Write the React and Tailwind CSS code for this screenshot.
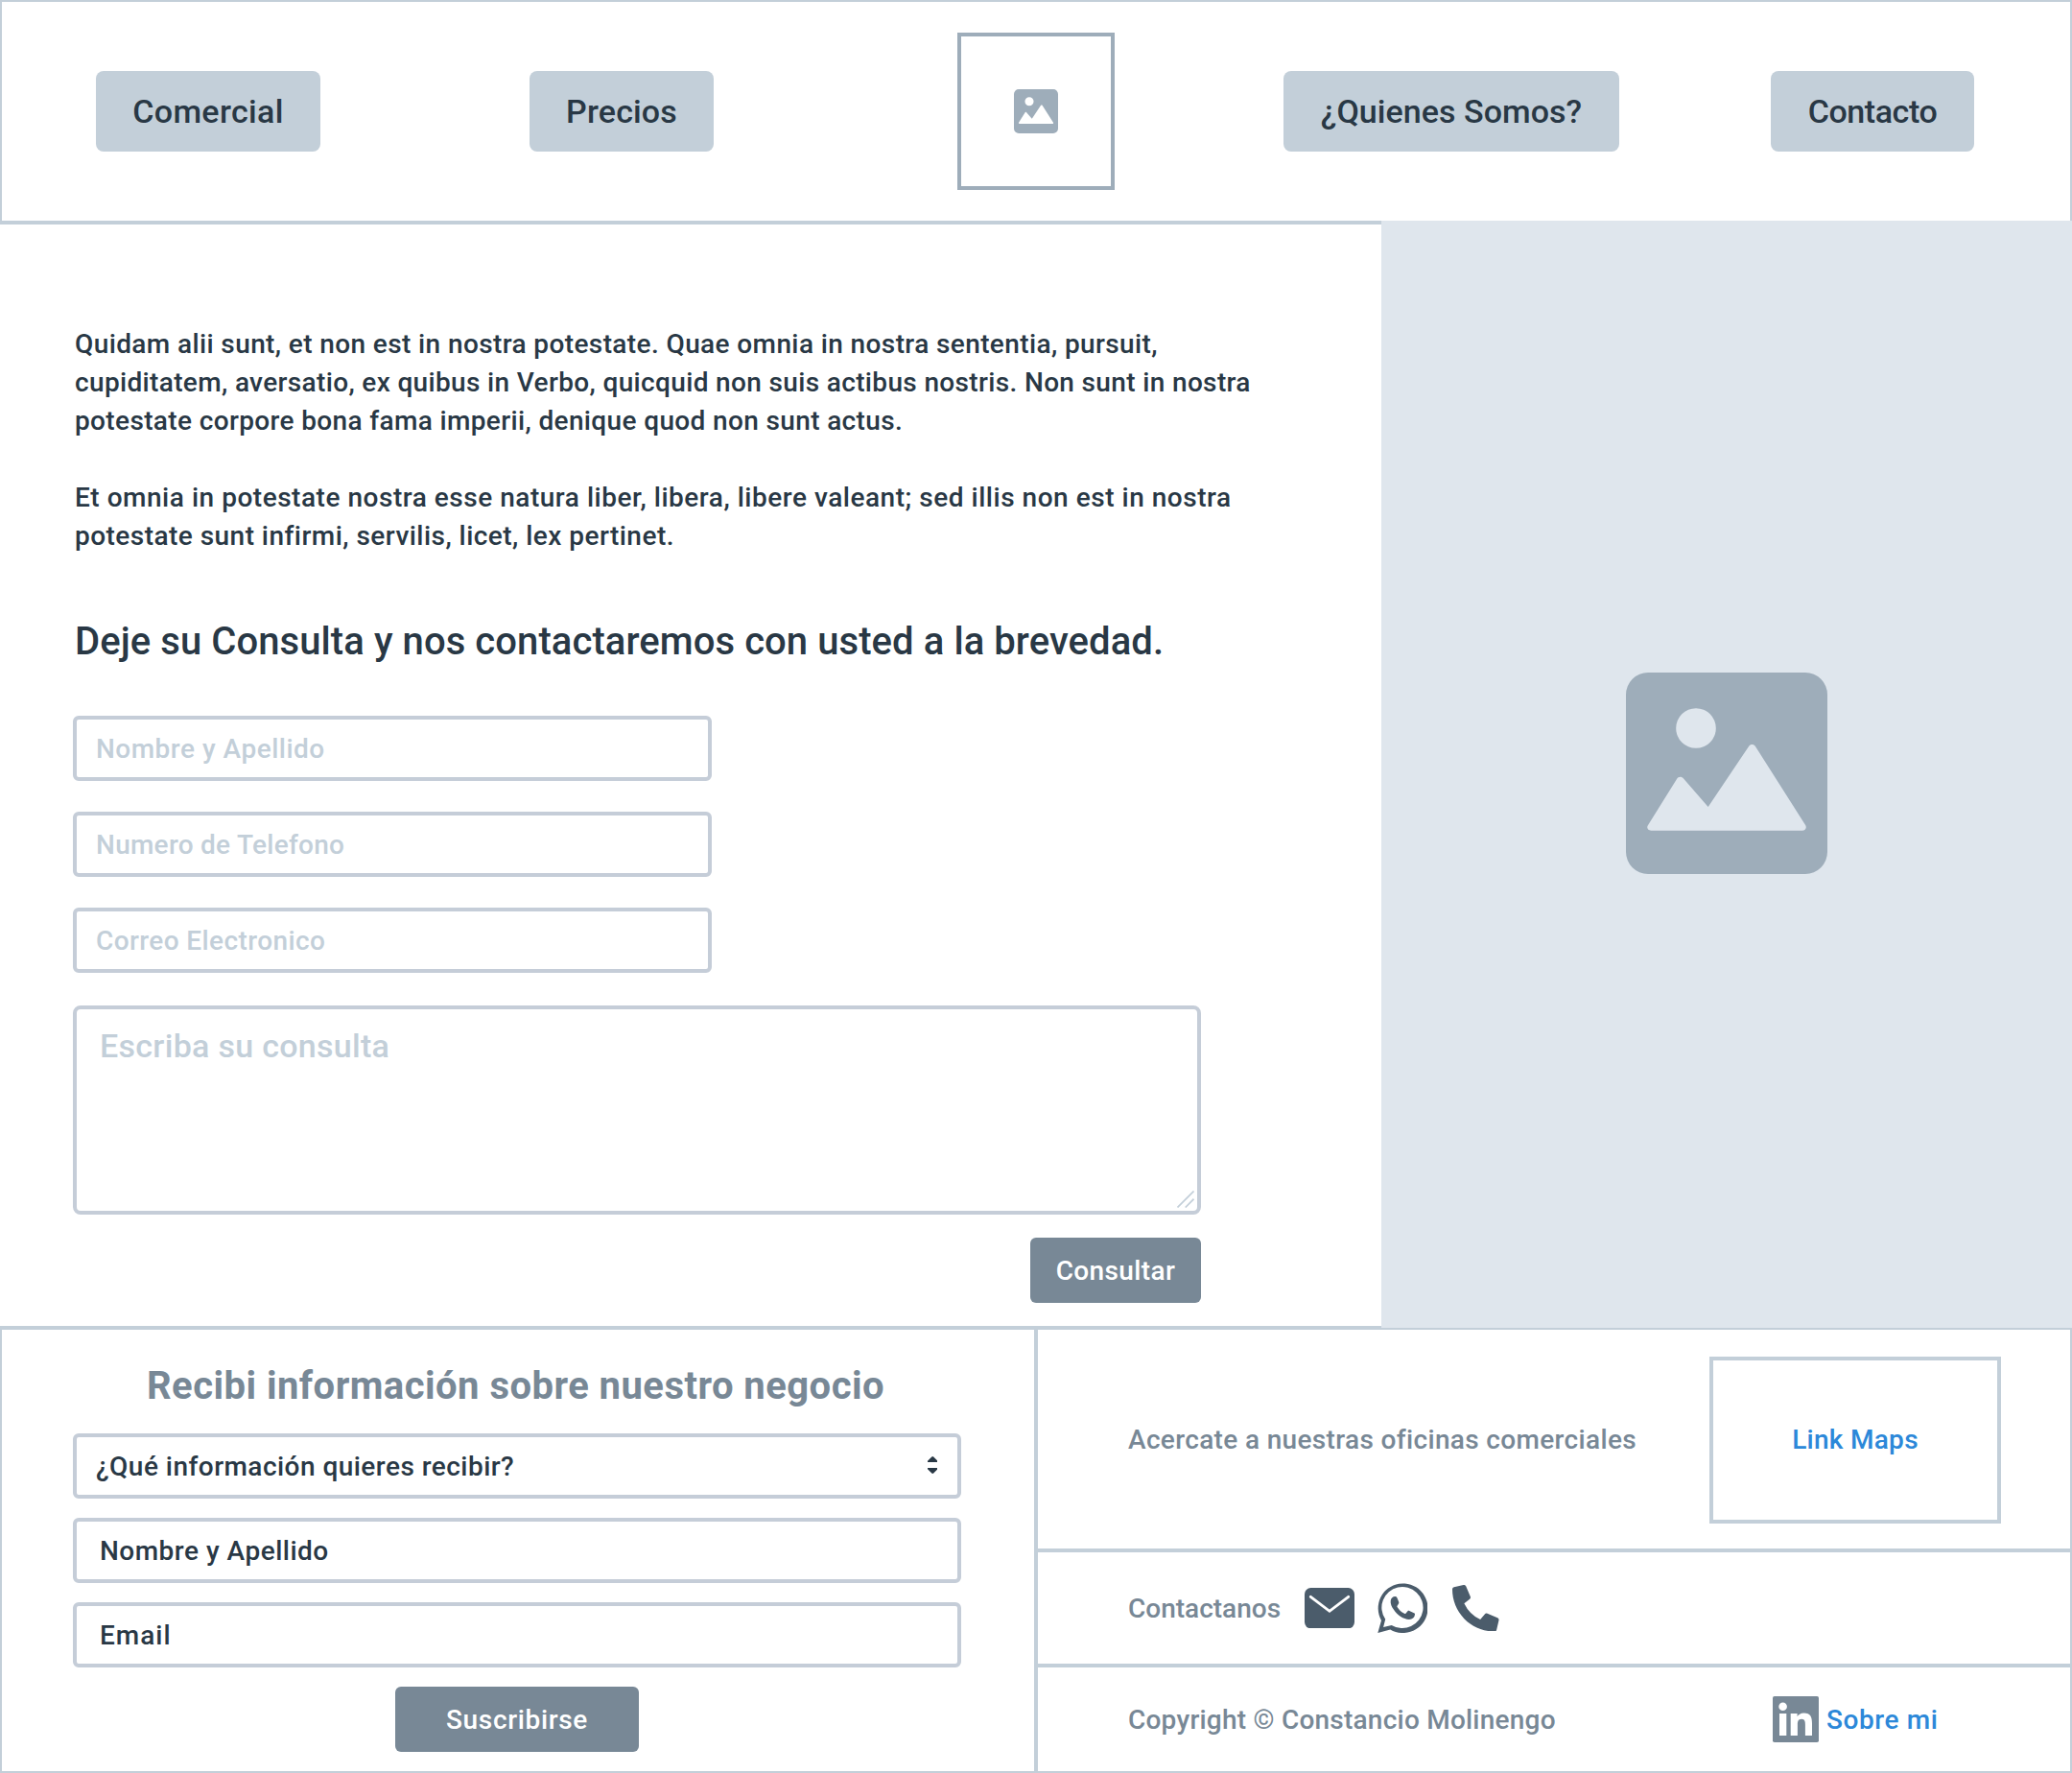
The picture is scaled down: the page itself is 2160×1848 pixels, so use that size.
import React from "react";

function NavButton({ className, children }) {
  return (
    <button
      className={`flex h-[84px] shrink-0 items-center justify-center whitespace-nowrap rounded-[8px] bg-[#c3cfd9] text-[34px] leading-[40px] ${className}`}
    >
      {children}
    </button>
  );
}

function Field({ className = "", children }) {
  return (
    <div
      className={`flex h-[68px] shrink-0 items-center whitespace-nowrap rounded-[6px] border-4 border-[#c5cdd8] pt-[2px] ${className}`}
    >
      {children}
    </div>
  );
}

function ImageIcon({ className }) {
  return (
    <svg viewBox="0 0 210 210" className={className}>
      <path
        fillRule="evenodd"
        fill="#9eadba"
        d="M23 0H187A23 23 0 0 1 210 23V187A23 23 0 0 1 187 210H23A23 23 0 0 1 0 187V23A23 23 0 0 1 23 0ZM73 37.2A20.8 20.8 0 1 0 73 78.8A20.8 20.8 0 1 0 73 37.2ZM22.9 159.2L53 111C54.5 108.2 57.8 108 59.8 110.2L85.7 140L128.2 76.8C129.6 74.3 133.2 74.3 134.8 76.8L187.1 159C188.8 161.8 187 164.7 183.8 164.7H26.2C23 164.7 21.2 162 22.9 159.2Z"
      />
    </svg>
  );
}

function MailIcon() {
  return (
    <svg viewBox="0 0 52 42.3" className="h-[42.3px] w-[52px] shrink-0">
      <rect width="52" height="42.3" rx="6.5" fill="#4b5c6b" />
      <path
        d="M6.3 9.3L26 24.3L45.7 9.3"
        fill="none"
        stroke="#fff"
        strokeWidth="2.9"
        strokeLinecap="round"
      />
    </svg>
  );
}

function WhatsappIcon() {
  return (
    <svg viewBox="0 0 52 52" className="size-[52px] shrink-0" fill="#4b5c6b">
      <path
        fillRule="evenodd"
        d="M0.3 51.9L4 38.9A25.9 25.8 0 1 1 13.3 48.4ZM6.1 46.1L14.7 43.9A21.6 21.5 0 1 0 8.2 37.8Z"
      />
      <path d="M13.7 18.4C14.1 15.8 16.3 13.9 18.6 14.1C19.8 14.2 20.2 14.9 20.7 16.1L22.2 19.8C22.6 20.9 22.2 21.7 20.6 23.7C20.3 24.2 20.3 24.5 20.6 25C22.5 28 24.7 30.1 28 31.8C28.7 32.2 29.1 32.1 29.6 31.5L31.5 29.2C32 28.6 32.5 28.6 33.2 28.9L38 31.2C38.8 31.6 39.1 31.9 39 32.7C38.7 35.9 36.3 37.7 33 37.9C27.5 38 20.7 33.6 16.8 27.5C14.8 24.6 13.3 21.5 13.7 18.4Z" />
    </svg>
  );
}

function PhoneIcon() {
  return (
    <svg viewBox="0 0 512 512" className="size-[48.5px] shrink-0" fill="#4b5c6b">
      <path d="M497.39 361.8l-112-48a24 24 0 0 0-28 6.9l-49.6 60.6A370.66 370.66 0 0 1 130.6 204.11l60.6-49.6a23.94 23.94 0 0 0 6.9-28l-48-112A24.16 24.16 0 0 0 122.6.61l-104 24A24 24 0 0 0 0 48c0 256.5 207.9 464 464 464a24 24 0 0 0 23.4-18.6l24-104a24.29 24.29 0 0 0-14.01-27.6z" />
    </svg>
  );
}

function LinkedinIcon() {
  return (
    <svg viewBox="0 0 48 48" className="size-[48px] shrink-0">
      <rect width="48" height="48" rx="1.8" fill="#788896" />
      <g fill="#fff">
        <circle cx="10.6" cy="10.7" r="4.3" />
        <rect x="7" y="18" width="7.3" height="23" />
        <path d="M18.7 18H25.6V21.1H25.7C26.7 19.3 29 17.4 32.5 17.4C39.7 17.4 41 22.1 41 28.3V41H33.9V29.8C33.9 27.1 33.8 23.7 30.1 23.7C26.4 23.7 25.9 26.6 25.9 29.6V41H18.7Z" />
      </g>
    </svg>
  );
}

function Header() {
  return (
    <header className="flex h-[230px] items-center border-x-2 border-t-2 border-[#c3cfd9] pl-[98px]">
      <NavButton className="w-[234px] tracking-[0.35px]">Comercial</NavButton>
      <NavButton className="ml-[218px] w-[192px] tracking-[0.16px]">Precios</NavButton>
      <div className="ml-[254px] flex size-[164px] shrink-0 items-center justify-center border-4 border-[#9eadba]">
        <ImageIcon className="size-[46px]" />
      </div>
      <NavButton className="ml-[176px] w-[350px] tracking-[0.05px]">¿Quienes Somos?</NavButton>
      <NavButton className="ml-[158px] w-[212px] tracking-[-0.43px]">Contacto</NavButton>
    </header>
  );
}

function Main() {
  return (
    <main className="flex h-[1156px]">
      <section className="w-[1440px] shrink-0 border-y-4 border-[#c3cfd9] pl-[76px] pt-[105px]">
        <div className="flex flex-col gap-[40px] whitespace-nowrap pl-[2px] text-[28px] leading-[40px]">
          <p>
            <span className="block tracking-[0.39px]">
              Quidam alii sunt, et non est in nostra potestate. Quae omnia in nostra sententia, pursuit,
            </span>
            <span className="block tracking-[0.35px]">
              cupiditatem, aversatio, ex quibus in Verbo, quicquid non suis actibus nostris. Non sunt in nostra
            </span>
            <span className="block tracking-[0.362px]">
              potestate corpore bona fama imperii, denique quod non sunt actus.
            </span>
          </p>
          <p>
            <span className="block tracking-[0.525px]">
              Et omnia in potestate nostra esse natura liber, libera, libere valeant; sed illis non est in nostra
            </span>
            <span className="block tracking-[0.464px]">
              potestate sunt infirmi, servilis, licet, lex pertinet.
            </span>
          </p>
        </div>
        <h1 className="mt-[66px] whitespace-nowrap pl-[2px] text-[40px] leading-[48px] tracking-[0.074px]">
          Deje su Consulta y nos contactaremos con usted a la brevedad.
        </h1>
        <div className="mt-[53px] flex w-[666px] flex-col gap-[32px] text-[28px] text-[#c3cfd9]">
          <Field className="pl-[20px] tracking-[0.494px]">Nombre y Apellido</Field>
          <Field className="pl-[20px] tracking-[0.265px]">Numero de Telefono</Field>
          <Field className="pl-[20px] tracking-[0.4px]">Correo Electronico</Field>
        </div>
        <div className="mt-[34px] flex h-[218px] w-[1176px] items-start justify-between rounded-[8px] border-4 border-[#c5cdd8] pl-[24px] pt-[18px] text-[34px] leading-[40px] tracking-[0.298px] text-[#c3cfd9]">
          <span>Escriba su consulta</span>
          <svg viewBox="0 0 18 18" className="mb-[3px] mr-[3px] size-[18px] self-end" fill="none" stroke="#c3cfd9" strokeWidth="1.7">
            <path d="M0.5 17.5L17.5 0.5M8.7 17.5L17.5 8.7" />
          </svg>
        </div>
        <div className="mt-[24px] flex w-[1176px] justify-end">
          <button className="h-[68px] w-[178px] rounded-[6px] bg-[#788896] pt-[2px] text-[28px] tracking-[0.376px] text-white">
            Consultar
          </button>
        </div>
      </section>
      <aside className="flex grow items-center justify-center border-b-2 border-[#c3cfd9] bg-[#dfe6ed] pb-[2px]">
        <ImageIcon className="size-[210px]" />
      </aside>
    </main>
  );
}

function Subscribe() {
  return (
    <section className="flex w-[1080px] shrink-0 flex-col border-r-4 border-[#c3cfd9] pl-[74px] pt-[35px] text-[28px]">
      <h2 className="whitespace-nowrap pl-[77px] text-[40px] font-bold leading-[48px] tracking-[0.46px] text-[#788896]">
        Recibi información sobre nuestro negocio
      </h2>
      <div className="mt-[25px] flex w-[926px] flex-col gap-[20px]">
        <Field className="justify-between pl-[20px] pr-[21px] tracking-[0.465px]">
          <span>¿Qué información quieres recibir?</span>
          <svg viewBox="0 0 10.5 18" className="mb-[4px] h-[18px] w-[10.5px]" fill="#293845">
            <path d="M0 6V4.8L4.3 0.4Q5.25 -0.4 6.2 0.4L10.5 4.8V6ZM0 12V13.2L4.3 17.6Q5.25 18.4 6.2 17.6L10.5 13.2V12Z" />
          </svg>
        </Field>
        <Field className="pl-[24px] tracking-[0.494px]">Nombre y Apellido</Field>
        <Field className="pl-[24px] tracking-[1px]">Email</Field>
        <button className="ml-[336px] h-[68px] w-[254px] rounded-[6px] bg-[#788896] pt-[2px] tracking-[0.653px] text-white">
          Suscribirse
        </button>
      </div>
    </section>
  );
}

function Contact() {
  return (
    <section className="flex grow flex-col whitespace-nowrap text-[28px] text-[#788896]">
      <div className="flex h-[232px] items-center border-b-4 border-[#c3cfd9] pl-[94px]">
        <span className="w-[606px] pt-[2px] tracking-[0.344px]">Acercate a nuestras oficinas comerciales</span>
        <a className="mt-[2px] flex h-[174px] w-[304px] items-center justify-center border-4 border-[#c3cfd9] tracking-[0.285px] text-[#2c88d9]">
          Link Maps
        </a>
      </div>
      <div className="flex h-[120px] items-center border-b-4 border-[#c3cfd9] pl-[94px]">
        <span className="w-[184px] pt-[2px] tracking-[0px]">Contactanos</span>
        <div className="flex items-center gap-x-[24px]">
          <MailIcon />
          <WhatsappIcon />
          <div className="pl-[2px]">
            <PhoneIcon />
          </div>
        </div>
      </div>
      <div className="flex h-[108px] items-center pl-[94px]">
        <span className="w-[672px] pt-[2px] tracking-[0.228px]">Copyright © Constancio Molinengo</span>
        <a className="flex items-center gap-[8px] tracking-[0.591px] text-[#2c88d9]">
          <LinkedinIcon />
          <span className="pt-[2px]">Sobre mi</span>
        </a>
      </div>
    </section>
  );
}

export default function App() {
  return (
    <div className="h-[1848px] w-[2160px] overflow-hidden bg-white font-[Roboto,sans-serif] font-medium text-[#293845]">
      <Header />
      <Main />
      <footer className="flex h-[462px] border-x-2 border-b-2 border-[#c3cfd9]">
        <Subscribe />
        <Contact />
      </footer>
    </div>
  );
}
